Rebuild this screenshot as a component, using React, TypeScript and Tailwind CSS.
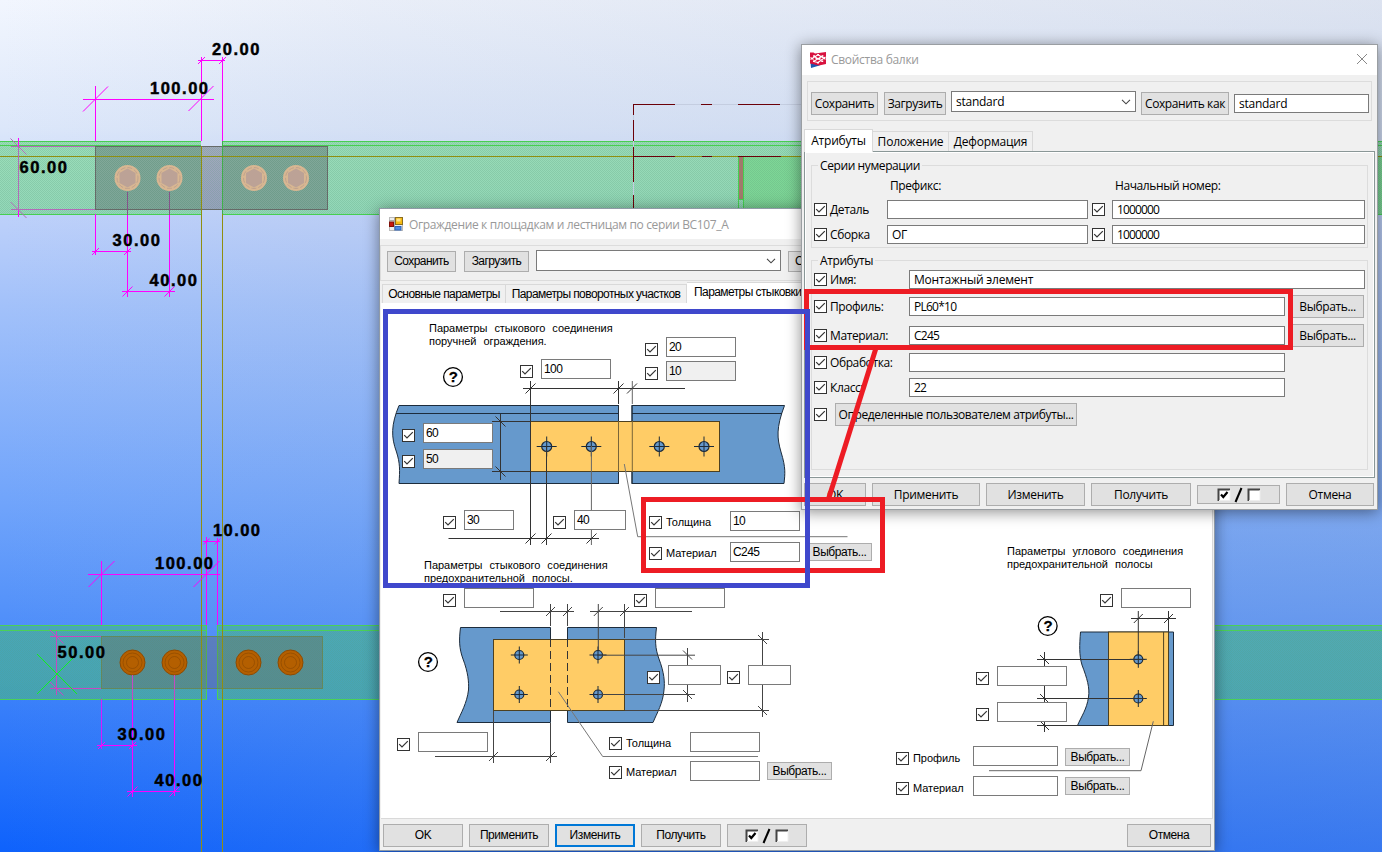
import React from "react";

/* ---------- shared controls ---------- */

const SEGOE = "font-['Open_Sans','Noto_Sans',sans-serif]";
const SANS = "font-['Liberation_Sans',Arial,sans-serif]";

function Check({ className = "" }: { className?: string }) {
  return (
    <span className={`block size-[13px] shrink-0 border border-[#333] bg-white ${className}`}>
      <svg viewBox="0 0 11 11" className="block size-[11px]" fill="none" stroke="#333" strokeWidth="1.2">
        <path d="M1.2 5.2 L4 8 L9.8 2.2" />
      </svg>
    </span>
  );
}

function Field({ className = "", children }: { className?: string; children?: React.ReactNode }) {
  return (
    <div className={`flex shrink-0 items-center overflow-hidden whitespace-nowrap border border-[#7a7a7a] ${className}`}>
      {children}
    </div>
  );
}

function Btn({ className = "", children }: { className?: string; children?: React.ReactNode }) {
  return (
    <button
      className={`flex shrink-0 items-center justify-center whitespace-nowrap bg-[#e1e1e1] ${className}`}
    >
      {children}
    </button>
  );
}

function Chevron() {
  return (
    <svg viewBox="0 0 10 6" className="h-[6px] w-[10px]" fill="none" stroke="#444" strokeWidth="1.1">
      <path d="M1 0.8 L5 4.8 L9 0.8" />
    </svg>
  );
}

function ToggleGlyph() {
  return (
    <svg viewBox="0 0 44 16" className="h-4 w-11" fill="none">
      <rect x="1" y="2" width="12" height="12" fill="#fff" />
      <path d="M1.5 14 V2.5 H13" stroke="#444" strokeWidth="2" />
      <path d="M13 3 V13.5 H2" stroke="#eee" />
      <path d="M4 7.5 L6.3 10 L10.5 5" stroke="#000" strokeWidth="2.2" />
      <path d="M18.5 15 L24.5 1" stroke="#000" strokeWidth="2" />
      <rect x="31" y="2" width="12" height="12" fill="#fff" />
      <path d="M31.5 14 V2.5 H43" stroke="#444" strokeWidth="2" />
      <path d="M43 3 V13.5 H32" stroke="#eee" />
    </svg>
  );
}

/* ---------- model view behind the dialogs ---------- */

const DIM = "#ff00ff";
const DIM_DULL = "#b06cb8";

function DimText({ x, y, w, children }: { x: number; y: number; w: number; children: string }) {
  return (
    <text
      x={x}
      y={y}
      textLength={w}
      fontSize="16.5"
      fontWeight="700"
      fill="#000"
      stroke="#000"
      strokeWidth="0.45"
      fontFamily="Liberation Sans, Arial, sans-serif"
    >
      {children}
    </text>
  );
}

function slash(x: number, y: number, r: number) {
  return `M${x - r} ${y + r} L${x + r} ${y - r}`;
}

function backslash(x: number, y: number, r: number) {
  return `M${x - r} ${y - r} L${x + r} ${y + r}`;
}

function Scene() {
  return (
    <svg viewBox="0 0 1382 852" className="absolute inset-0 h-[852px] w-[1382px]" fill="none">
      <defs>
        <pattern id="dots" width="2" height="2" patternUnits="userSpaceOnUse">
          <rect width="1" height="1" fill="#5a9a7a" fillOpacity="0.25" />
          <rect x="1" y="1" width="1" height="1" fill="#5a9a7a" fillOpacity="0.25" />
        </pattern>
      </defs>

      {/* upper rail */}
      <rect x="0" y="141" width="201" height="73" fill="#7cdc98" fillOpacity="0.66" />
      <rect x="222" y="141" width="1160" height="73" fill="#7cdc98" fillOpacity="0.66" />
      <rect x="743" y="157" width="639" height="57" fill="#6ed680" fillOpacity="0.6" />
      <rect x="0" y="141" width="201" height="73" fill="url(#dots)" />
      <rect x="222" y="141" width="1160" height="73" fill="url(#dots)" />
      <path d="M0 141.5 H201 M0 145.5 H201 M0 214.5 H201 M222 141.5 H1382 M222 145.5 H1382 M222 214.5 H1382" stroke="#46cf50" />
      <rect x="95.5" y="146.5" width="232" height="63" fill="#62606e" fillOpacity="0.42" stroke="#666a68" />
      <rect x="96" y="147" width="231" height="62" fill="url(#dots)" />
      <path d="M222.5 141 V214" stroke="#3fb04a" />
      <path d="M201.5 146 V852 M222.5 214 V852 M0 156.5 H1382" stroke="#8f8f10" />
      {[127.5, 169.5, 254, 296].map((x) => (
        <g key={x}>
          <circle cx={x} cy="178" r="13" fill="#d8b792" />
          <circle cx={x} cy="178" r="10.5" stroke="#c0a28e" strokeDasharray="5 2" />
          <path
            d={`M${x} 168.5 L${x + 8} 173 V183 L${x} 187.5 L${x - 8} 183 V173 Z`}
            fill="#bca296"
          />
        </g>
      ))}
      <rect x="738" y="157" width="5" height="42" fill="#a07a6c" />
      <path d="M738.5 157 V208 M743.5 157 V208 M738 199.5 H744" stroke="#46cf50" />
      <path d="M633.5 104.5 H802 M633.5 104 V208" stroke="#c4cde0" />
      <path
        d="M633 104.5 H675 M701 104.5 H712 M738 104.5 H780 M633.5 104 V115 M633.5 120 V141 M633.5 147 V182 M633.5 195 V208 M633 156.5 H675 M702 156.5 H712 M738 156.5 H781"
        stroke="#6b0008"
      />

      {/* upper dimensions */}
      <g stroke={DIM}>
        <path d="M198 60.5 H225 M201.5 57 V141 M222.5 57 V141 M83 99.5 H214 M95.5 86 V141" />
        <path d={slash(201.5, 60.5, 3.5)} />
        <path d={slash(222.5, 60.5, 3.5)} />
        <path d={slash(95.5, 99, 12.5)} />
        <path d={slash(201, 98.5, 12.5)} />
        <path d="M92 251.5 H131 M95.5 214 V255 M127.5 215 V297 M169.5 215 V297 M122 291.5 H175 M18.5 138 V146 M18.5 210 V217" />
        <path d={slash(95.5, 251.5, 3.5)} />
        <path d={slash(127.5, 251.5, 3.5)} />
        <path d={slash(127.5, 291.5, 5)} />
        <path d={slash(169.5, 291.5, 5)} />
      </g>
      <g stroke={DIM_DULL}>
        <path d="M18.5 146 V210 M11 146.5 H95 M11 209.5 H95" />
        <path d="M127.5 192 V215 M169.5 192 V215" stroke="#85538a" />
        <path d={backslash(18.5, 146.5, 8)} />
        <path d={backslash(18.5, 210, 8)} />
      </g>

      {/* lower rail */}
      <rect x="0" y="625" width="207" height="74" fill="#46b496" fillOpacity="0.66" />
      <rect x="217" y="625" width="1165" height="74" fill="#46b496" fillOpacity="0.66" />
      <rect x="0" y="630" width="207" height="69" fill="url(#dots)" />
      <rect x="217" y="630" width="1165" height="69" fill="url(#dots)" />
      <path d="M0 625.5 H206.5 V699.5 H0 M0 630.5 H206 M1382 625.5 H217.5 V699.5 H1382 M217 630.5 H1382" stroke="#4bd058" />
      <rect x="101.5" y="636.5" width="221" height="52" fill="#706250" fillOpacity="0.34" stroke="#64885c" />
      <path d="M201.5 625 V852 M222.5 625 V852" stroke="#8f8f10" />
      {[132.5, 174.5, 248.5, 290.5].map((x) => (
        <g key={x} stroke="#8f4a00">
          <circle cx={x} cy="662.5" r="12.5" fill="#b45f00" />
          <circle cx={x} cy="662.5" r="9.5" strokeOpacity="0.7" />
          <circle cx={x} cy="662.5" r="6" strokeOpacity="0.7" />
        </g>
      ))}

      {/* lower dimensions */}
      <g stroke={DIM}>
        <path d="M203 541.5 H220 M206.5 537 V625 M217.5 538 V625 M88 574.5 H220 M101.5 561 V625" />
        <path d={slash(206.5, 541.5, 3)} />
        <path d={slash(217.5, 541.5, 3)} />
        <path d={slash(101.5, 574, 13)} />
        <path d={slash(206.5, 574, 13)} />
        <path d="M101.5 699 V749" strokeOpacity="0.8" />
        <path d="M97 745.5 H137 M132.5 699 V797 M174.5 699 V796 M127 791.5 H180" />
        <path d={slash(101.5, 745.5, 3.5)} />
        <path d={slash(132.5, 745.5, 3.5)} />
        <path d={slash(132.5, 791.5, 5)} />
        <path d={slash(174.5, 791.5, 5)} />
      </g>
      <g stroke="#c748c0">
        <path d="M56.5 631 V695 M50 636.5 H101 M50 688.5 H101 M132.5 675 V699 M174.5 675 V699" />
        <path d={backslash(56.5, 636.5, 7)} />
        <path d={backslash(56.5, 688.5, 7)} />
      </g>
      <path d="M37 694 L77 654 M37 654 L77 694" stroke="#10f020" />

      <DimText x={212} y={55} w={47.5}>20.00</DimText>
      <DimText x={150} y={94} w={58}>100.00</DimText>
      <DimText x={19.5} y={173} w={47.5}>60.00</DimText>
      <DimText x={112.5} y={246} w={47.5}>30.00</DimText>
      <DimText x={149.5} y={286} w={47.5}>40.00</DimText>
      <DimText x={213} y={536} w={47}>10.00</DimText>
      <DimText x={155} y={569} w={58}>100.00</DimText>
      <DimText x={57.5} y={658} w={47.5}>50.00</DimText>
      <DimText x={117.5} y={740} w={47.5}>30.00</DimText>
      <DimText x={154.5} y={786} w={47.5}>40.00</DimText>
    </svg>
  );
}

/* ---------- railing component dialog ---------- */

function Hole({ x, y, r = 5, c = 10 }: { x: number; y: number; r?: number; c?: number }) {
  return (
    <g stroke="#1c2a38">
      <circle cx={x} cy={y} r={r} fill="#6699cc" strokeWidth="1.2" />
      <path d={`M${x - c} ${y} H${x + c} M${x} ${y - c} V${y + c}`} strokeWidth="1" />
    </g>
  );
}

function Help({ x, y }: { x: number; y: number }) {
  return (
    <g>
      <circle cx={x} cy={y} r="9.4" fill="#fff" stroke="#000" strokeWidth="1.3" />
      <text x={x} y={y + 5.2} textAnchor="middle" fontSize="15" fontWeight="700" fill="#000" stroke="#000" strokeWidth="0.3" fontFamily="Liberation Sans, Arial, sans-serif">
        ?
      </text>
    </g>
  );
}

function Diagrams() {
  return (
    <svg viewBox="381 303 832 516" className="absolute inset-0 h-[516px] w-[832px]" fill="none" strokeWidth="1">
      {/* handrail splice */}
      <g fill="#6699cc" stroke="#1d2c3c">
        <path d="M399 405.5 C391 425 391 437 396.5 452 C400 463 400 470 399 483.5 H618.5 V405.5 Z" />
        <path d="M632 405.5 H784.5 C776 428 777 438 781 452 C786 468 785 474 784 483.5 H632 Z" />
      </g>
      <path d="M396 413.5 H618 M632 413.5 H782" stroke="#1d2c3c" />
      <path d="M618.5 405 V484 M632 405 V484" stroke="#1d2c3c" />
      <rect x="530.5" y="421.5" width="189" height="50" fill="#ffcc66" stroke="#4d4020" />
      <path d="M618.5 421 V472 M632.3 421 V472" stroke="#7a6538" />
      <Hole x={546.7} y={446.5} />
      <Hole x={591.3} y={446.5} />
      <Hole x={659.3} y={446.5} />
      <Hole x={704} y={446.5} />
      <g stroke="#333">
        <path d="M523 388.5 H685 M530.5 381 V545 M618.5 381 V404 M546.5 446 V545 M448.5 538.5 H599" />
        <path d="M591.4 446 V545 M632.3 381 V404" stroke="#666" />
        <path d="M500.5 414 V480 M492 421.5 H531 M492 471.5 H531" />
        <path d={slash(530.5, 388.5, 5)} />
        <path d={slash(618.5, 388.5, 5)} />
        <path d={slash(632, 388.5, 5)} />
        <path d={slash(530.5, 538.5, 5)} />
        <path d={slash(546.5, 538.5, 5)} />
        <path d={slash(591.5, 538.5, 5)} />
        <path d={backslash(500.5, 421.5, 5)} />
        <path d={backslash(500.5, 471.5, 5)} />
      </g>
      <path d="M624.3 464 L637.7 536.7 H847.5" stroke="#777" />

      {/* toe-board splice */}
      <g fill="#6699cc" stroke="#1d2c3c">
        <path d="M460.5 627.5 C459 640 459 648 463 659 C468 672 469 682 468.5 690 C467 703 461 713 457 722.5 H550.5 V627.5 Z" />
        <path d="M567.5 627.5 H656.5 C655 640 655 648 659 659 C664 672 665 682 664 690 C663 703 657 713 653 722.5 H567.5 Z" />
      </g>
      <rect x="493.5" y="639.5" width="131" height="71" fill="#ffcc66" stroke="#4d4020" />
      <path d="M550.5 639 V711 M567.5 639 V711" stroke="#333" strokeDasharray="8 4" />
      <Hole x={519.3} y={655} r={4.5} c={8.5} />
      <Hole x={519.3} y={694.5} r={4.5} c={8.5} />
      <Hole x={598} y={655} r={4.5} c={8.5} />
      <Hole x={598} y={694.5} r={4.5} c={8.5} />
      <g stroke="#444">
        <path d="M500 611.5 H574 M590 611.5 H692 M550.5 604 V626 M567.5 604 V626 M598.3 604 V650 M624.5 604 V638" />
        <path d="M598 655.2 H695 M598 694.5 H695 M687.5 648 V702 M625 639.5 H769 M625 710.5 H769 M762.5 632 V717" />
        <path d="M435 756.5 H557 M493.5 711 V763 M550.5 723 V763" />
        <path d={slash(550.5, 611.5, 4.5)} />
        <path d={slash(567.5, 611.5, 4.5)} />
        <path d={slash(598.3, 611.5, 4.5)} />
        <path d={slash(624.5, 611.5, 4.5)} />
        <path d={backslash(687.5, 655, 4.5)} />
        <path d={backslash(687.5, 694.5, 4.5)} />
        <path d={backslash(762.5, 639.5, 4.5)} />
        <path d={backslash(762.5, 710.5, 4.5)} />
        <path d={slash(493.5, 756.5, 4.5)} />
        <path d={slash(550.5, 756.5, 4.5)} />
      </g>
      <path d="M558.3 691.7 L602.7 756.5 H758" stroke="#777" />

      {/* toe-board corner joint */}
      <path
        d="M1080.5 632 C1079.5 645 1079 655 1082 665 C1087 678 1090 688 1088.5 697 C1087 709 1081 717 1077.5 725.5 H1173.5 V632 Z"
        fill="#6699cc"
        stroke="#1d2c3c"
      />
      <rect x="1108.5" y="632" width="60" height="93.5" fill="#ffcc66" stroke="#4d4020" />
      <path d="M1163.6 632 V725.5" stroke="#4d4020" />
      <Hole x={1138.3} y={659.3} r={4.5} c={8.5} />
      <Hole x={1138.3} y={698.5} r={4.5} c={8.5} />
      <g stroke="#333">
        <path d="M1131 618.5 H1176 M1138.3 611 V655 M1168.5 611 V632 M1044.5 652 V732 M1037 659.5 H1145 M1037 698.5 H1145 M1037 725.5 H1078" />
        <path d={slash(1138.3, 618.5, 4.5)} />
        <path d={slash(1168.5, 618.5, 4.5)} />
        <path d={backslash(1044.5, 659.5, 4.5)} />
        <path d={backslash(1044.5, 698.5, 4.5)} />
        <path d={backslash(1044.5, 725.5, 4.5)} />
      </g>
      <path d="M1153.3 721.3 L1141 770.7 H989" stroke="#666" />

      <Help x={453} y={377} />
      <Help x={428} y={662} />
      <Help x={1047.7} y={626} />
    </svg>
  );
}

/* Controls pinned on the drawing. */
const checks = [
  "left-[139px] top-[62px]", "left-[264px] top-[40px]", "left-[264px] top-[64px]",
  "left-[21px] top-[126px]", "left-[21px] top-[152px]", "left-[62px] top-[213px]",
  "left-[172px] top-[213px]", "left-[62px] top-[291px]", "left-[253px] top-[291px]",
  "left-[266px] top-[368px]", "left-[346px] top-[368px]", "left-[16px] top-[435px]",
  "left-[719px] top-[291px]", "left-[595px] top-[369px]", "left-[595px] top-[405px]",
];

const labelled = [
  { pos: "left-[268px] top-[213px]", text: "Толщина" },
  { pos: "left-[268px] top-[244px]", text: "Материал" },
  { pos: "left-[228px] top-[434px]", text: "Толщина" },
  { pos: "left-[228px] top-[463px]", text: "Материал" },
  { pos: "left-[515px] top-[449px]", text: "Профиль" },
  { pos: "left-[515px] top-[479px]", text: "Материал" },
];

const fields = [
  { pos: "left-[160px] top-[56px] w-[70px] bg-white", v: "100" },
  { pos: "left-[285px] top-[34px] w-[70px] bg-white", v: "20" },
  { pos: "left-[285px] top-[58px] w-[70px] bg-[#f0f0f0]", v: "10" },
  { pos: "left-[42px] top-[120px] w-[70px] bg-white", v: "60" },
  { pos: "left-[42px] top-[146px] w-[70px] bg-[#f0f0f0]", v: "50" },
  { pos: "left-[83px] top-[207px] w-[50px] bg-white", v: "30" },
  { pos: "left-[193px] top-[207px] w-[52px] bg-white", v: "40" },
  { pos: "left-[349px] top-[208px] w-[70px] bg-white", v: "10" },
  { pos: "left-[349px] top-[239px] w-[70px] bg-white", v: "C245" },
  { pos: "left-[83px] top-[285px] w-[70px] bg-white", v: "" },
  { pos: "left-[274px] top-[285px] w-[70px] bg-white", v: "" },
  { pos: "left-[287px] top-[362px] w-[53px] bg-white", v: "" },
  { pos: "left-[367px] top-[362px] w-[43px] bg-white", v: "" },
  { pos: "left-[37px] top-[429px] w-[70px] bg-white", v: "" },
  { pos: "left-[309px] top-[429px] w-[70px] bg-white", v: "" },
  { pos: "left-[309px] top-[458px] w-[70px] bg-white", v: "" },
  { pos: "left-[740px] top-[285px] w-[70px] bg-white", v: "" },
  { pos: "left-[616px] top-[363px] w-[70px] bg-white", v: "" },
  { pos: "left-[616px] top-[399px] w-[70px] bg-white", v: "" },
  { pos: "left-[592px] top-[443px] w-[85px] bg-white", v: "" },
  { pos: "left-[592px] top-[473px] w-[85px] bg-white", v: "" },
];

const pickers = [
  "left-[426px] top-[240px]", "left-[386px] top-[459px]",
  "left-[684px] top-[445px]", "left-[684px] top-[474px]",
];

const captions = [
  { pos: "left-[48px] top-[19px]", a: "Параметры стыкового соединения", b: "поручней ограждения." },
  { pos: "left-[43px] top-[256px]", a: "Параметры стыкового соединения", b: "предохранительной полосы." },
  { pos: "left-[626px] top-[242px]", a: "Параметры углового соединения", b: "предохранительной полосы" },
];

function FormsIcon() {
  return (
    <svg viewBox="0 0 14 14" className="size-[14px]">
      <rect x="0.5" y="0.5" width="13" height="13" fill="#eee" stroke="#bbb" />
      <path d="M0 3.5 H6 M6 7.5 H14 M5.5 0 V14" stroke="#aaa" />
      <rect x="6.5" y="0.5" width="7" height="7" fill="#f5b90f" stroke="#8a6d20" />
      <rect x="7.5" y="1.5" width="4" height="3" fill="#ffe28a" />
      <rect x="0.5" y="5" width="4" height="4.5" fill="#c8170f" stroke="#801008" />
      <rect x="6" y="9.5" width="6" height="3.5" fill="#4f8be6" stroke="#2e64ba" />
    </svg>
  );
}

function RailingDialog() {
  return (
    <section
      className={`absolute left-[379px] top-[208px] flex h-[643px] w-[836px] flex-col border border-[#8f9aa6] bg-[#f0f0f0] text-[12px] leading-[13px] tracking-[-0.58px] text-black shadow-[0_2px_14px_rgba(0,0,0,0.45)] ${SANS}`}
    >
      <header className="flex h-[30px] shrink-0 items-center gap-[6px] bg-white pl-[9px]">
        <FormsIcon />
        <span className={`text-[12px] tracking-[-0.36px] text-[#999] ${SEGOE}`}>
          Ограждение к площадкам и лестницам по серии BC107_A
        </span>
      </header>

      <div className="mt-[6px] flex h-[36px] shrink-0 items-start border border-[#dcdcdc] pl-[6px] pt-[4px]">
        <Btn className="mt-px h-[21px] w-[69px] border border-[#adadad]">Сохранить</Btn>
        <Btn className="ml-2 mt-px h-[21px] w-[65px] border border-[#adadad]">Загрузить</Btn>
        <Field className="ml-[7px] h-[21px] w-[245px] justify-end bg-white pr-1">
          <Chevron />
        </Field>
        <div className="ml-[7px] mt-px flex h-[21px] w-[20px] items-center border border-[#adadad] bg-[#e1e1e1] pl-[6px]">
          С
        </div>
      </div>

      <nav className="mt-px flex h-[21px] shrink-0 items-end pl-[2px]">
        <span className="flex h-[19px] w-[124px] items-center justify-center border border-b-0 border-[#d9d9d9] pt-px">
          Основные параметры
        </span>
        <span className="flex h-[19px] w-[181px] items-center justify-center border border-b-0 border-l-0 border-[#d9d9d9] pt-px">
          Параметры поворотных участков
        </span>
        <span className="flex h-[21px] w-[130px] items-center whitespace-nowrap border border-b-0 border-l-0 border-[#d9d9d9] bg-white pb-[2px] pl-[7px]">
          Параметры стыковки
        </span>
      </nav>

      <div className="relative ml-px h-[516px] w-[832px] shrink-0 border-b border-r border-[#d9d9d9] bg-white">
        <Diagrams />
        {captions.map((c) => (
          <p key={c.pos} className={`absolute whitespace-nowrap text-[11px] tracking-[-0.03px] [word-spacing:4px] ${c.pos}`}>
            {c.a}
            <br />
            {c.b}
          </p>
        ))}
        {checks.map((pos) => (
          <Check key={pos} className={`absolute ${pos}`} />
        ))}
        {labelled.map((l) => (
          <label key={l.pos} className={`absolute flex items-center gap-[4px] text-[11px] tracking-[-0.05px] ${l.pos}`}>
            <Check />
            {l.text}
          </label>
        ))}
        {fields.map((f) => (
          <Field key={f.pos} className={`absolute h-[20px] pl-[2px] ${f.pos}`}>
            {f.v}
          </Field>
        ))}
        {pickers.map((pos) => (
          <Btn key={pos} className={`absolute h-[18px] w-[65px] border border-[#adadad] tracking-[-0.45px] ${pos}`}>
            Выбрать...
          </Btn>
        ))}
      </div>

      <footer className="flex gap-[6px] pl-[3px] pt-[5px] tracking-[-0.42px]">
        <Btn className="h-[23px] w-[80px] border border-[#adadad]">OK</Btn>
        <Btn className="h-[23px] w-[80px] border border-[#adadad]">Применить</Btn>
        <Btn className="h-[23px] w-[80px] border-2 border-[#0078d7]">Изменить</Btn>
        <Btn className="h-[23px] w-[80px] border border-[#adadad]">Получить</Btn>
        <Btn className="h-[23px] w-[80px] border border-[#adadad]"><ToggleGlyph /></Btn>
        <Btn className="ml-auto mr-[3px] h-[23px] w-[84px] border border-[#adadad]">Отмена</Btn>
      </footer>
    </section>
  );
}

/* ---------- beam properties dialog ---------- */

function TeklaIcon() {
  return (
    <svg viewBox="0 0 16 16" className="size-4" fill="none">
      <path d="M0.5 10 H9.5 V13.5 L1 16 Z" fill="#1c57b0" />
      <path d="M0 0.5 H3.5 L5 1.5 L16 0 V12 L9 13.5 L0 11.5 Z" fill="#d8123f" />
      <path
        d="M0.5 5.5 L3.5 7.5 M3.5 4 L12.5 9.5 M8 2.8 L15.5 7.2 M8 2.8 L0.5 7.5 M12.5 4 L3.5 9.5 M15.5 5 L8 10.5 M3.5 9.5 L8 10.5 M5.5 6.5 H10.5"
        stroke="#fff"
        strokeWidth="1.1"
      />
      <path d="M3.2 4 H5 M7.2 2.8 H9 M11.6 4 H13.4 M3 9.3 H4.5 M7 10.8 H9 M11.5 9.3 H13.2" stroke="#fff" strokeWidth="1.4" />
    </svg>
  );
}

function Group({ title, className, children }: { title: string; className: string; children: React.ReactNode }) {
  return (
    <div className={`relative flex flex-col border border-[#dcdcdc] ${className}`}>
      <span className="absolute -top-[8px] left-[6px] bg-[#f0f0f0] px-[2px] leading-4">{title}</span>
      {children}
    </div>
  );
}

function AttrRow({ label, value, wide, pick, className }: { label: string; value: string; wide?: boolean; pick?: boolean; className: string }) {
  return (
    <div className={`flex h-[19px] shrink-0 items-center pl-[2px] ${className}`}>
      <Check />
      <span className="ml-[3px] w-[79px] whitespace-nowrap">{label}</span>
      <Field
        className={
          wide
            ? "h-[19px] w-[456px] bg-white pl-1 tracking-[-0.2px]"
            : "h-[19px] w-[376px] bg-white pl-1 tracking-[-0.75px]"
        }
      >
        {value}
      </Field>
      {pick && <Btn className="ml-[5px] h-[23px] w-[74px] border border-[#adadad] pl-px">Выбрать...</Btn>}
    </div>
  );
}

function BeamDialog() {
  return (
    <section
      className={`absolute left-[801px] top-[44px] flex h-[466px] w-[577px] flex-col border border-[#9a9ea2] bg-[#f0f0f0] text-[12px] leading-4 tracking-[-0.4px] text-black shadow-[0_2px_14px_rgba(0,0,0,0.45)] ${SEGOE}`}
    >
      <header className="flex h-[30px] shrink-0 items-center bg-white pl-[8px] pr-[10px] tracking-[-0.3px] text-[#999]">
        <TeklaIcon />
        <span className="ml-[5px]">Свойства балки</span>
        <svg viewBox="0 0 10 10" className="ml-auto size-[10px] -translate-y-px" stroke="#888" strokeWidth="1">
          <path d="M0 0 L10 10 M10 0 L0 10" />
        </svg>
      </header>

      <div className="ml-[5px] mt-[6px] flex h-[40px] w-[565px] shrink-0 items-start border border-[#dcdcdc] pl-[3px] pt-[9px]">
        <Btn className="mt-px h-[23px] w-[67px] border border-[#adadad]">Сохранить</Btn>
        <Btn className="ml-[6px] mt-px h-[23px] w-[62px] border border-[#adadad]">Загрузить</Btn>
        <Field className="ml-[5px] h-[21px] w-[185px] justify-between bg-white pl-1 pr-1 tracking-[-0.25px]">
          <span>standard</span>
          <Chevron />
        </Field>
        <Btn className="ml-[5px] mt-px h-[23px] w-[88px] border border-[#adadad]">Сохранить как</Btn>
        <Field className="ml-[5px] mt-[3px] h-[19px] w-[135px] bg-white pl-1 tracking-[-0.25px]">standard</Field>
      </div>

      <nav className="mt-[8px] flex h-[22px] shrink-0 items-end pl-[2px] tracking-[-0.2px]">
        <span className="relative -mb-px flex h-[23px] w-[69px] items-center justify-center border border-b-0 border-[#d9d9d9] bg-white">
          Атрибуты
        </span>
        <span className="flex h-[20px] w-[76px] items-center justify-center border border-b-0 border-l-0 border-[#d9d9d9] pt-px">
          Положение
        </span>
        <span className="flex h-[20px] w-[84px] items-center justify-center border border-b-0 border-l-0 border-[#d9d9d9] pt-px">
          Деформация
        </span>
      </nav>

      <div className="ml-[2px] flex h-[327px] w-[571px] shrink-0 flex-col border border-[#8a9797] pl-[6px] pt-[13px] shadow-[inset_0_0_0_1px_#fff]">
        <Group title="Серии нумерации" className="h-[83px] w-[557px]">
          <div className="flex h-[34px] shrink-0 items-center pl-[78px] pt-[5px]">
            <span className="w-[225px]">Префикс:</span>
            <span>Начальный номер:</span>
          </div>
          {[
            { l: "Деталь", v: "" },
            { l: "Сборка", v: "ОГ" },
          ].map((r) => (
            <div key={r.l} className="mb-[6px] flex h-[19px] shrink-0 items-center pl-[2px]">
              <Check />
              <span className="ml-[3px] w-[57px]">{r.l}</span>
              <Field className="h-[19px] w-[201px] bg-white pl-1">{r.v}</Field>
              <Check className="ml-1" />
              <Field className="ml-[7px] h-[19px] w-[253px] bg-white pl-1 tracking-[-0.85px]">1000000</Field>
            </div>
          ))}
        </Group>

        <Group title="Атрибуты" className="mt-[12px] h-[210px] w-[557px]">
          <AttrRow label="Имя:" value="Монтажный элемент" wide className="mt-[9px]" />
          <AttrRow label="Профиль:" value="PL60*10" pick className="mt-[8px]" />
          <AttrRow label="Материал:" value="C245" pick className="mt-[10px]" />
          <AttrRow label="Обработка:" value="" className="mt-[8px]" />
          <AttrRow label="Класс:" value="22" className="mt-[6px]" />
          <div className="mt-[6px] flex items-center pl-[2px]">
            <Check />
            <Btn className="ml-[8px] h-[23px] w-[242px] border border-[#adadad]">
              Определенные пользователем атрибуты...
            </Btn>
          </div>
        </Group>
      </div>

      <footer className="flex items-center gap-[6px] pl-[2px] pt-[5px] tracking-[-0.3px]">
        <Btn className="h-[23px] w-[62px] border border-[#adadad]">OK</Btn>
        <Btn className="h-[23px] w-[108px] border border-[#adadad]">Применить</Btn>
        <Btn className="h-[23px] w-[99px] border border-[#adadad]">Изменить</Btn>
        <Btn className="h-[23px] w-[100px] border border-[#adadad]">Получить</Btn>
        <Btn className="h-[19px] w-[83px] border border-[#adadad]"><ToggleGlyph /></Btn>
        <Btn className="h-[23px] w-[88px] border border-[#adadad]">Отмена</Btn>
      </footer>
    </section>
  );
}

/* ---------- highlight frames over both dialogs ---------- */

function Highlights() {
  return (
    <div className="pointer-events-none absolute inset-0">
      <div className="absolute left-[804px] top-[289px] h-[61px] w-[489px] border-[5px] border-[#ed1c24]" />
      <div className="absolute left-[641px] top-[497px] h-[76px] w-[244px] border-[5px] border-[#ed1c24]" />
      <svg viewBox="0 0 1382 852" className="absolute inset-0 h-[852px] w-[1382px]">
        <path d="M876 348 L828.5 499" stroke="#ed1c24" strokeWidth="5" />
      </svg>
      <div className="absolute left-[383px] top-[309px] h-[279px] w-[427px] border-[5px] border-[#3f48cc]" />
    </div>
  );
}

export default function App() {
  return (
    <main className="relative h-[852px] w-[1382px] overflow-hidden bg-[linear-gradient(to_right,rgba(165,178,205,0)_0%,rgba(165,178,205,0.12)_27%,rgba(165,178,205,0.28)_100%),linear-gradient(to_bottom,#f2f6fe_0%,#dce7fa_15%,#bed1fa_25%,#a2c1fa_36%,#70a4fb_59%,#5794fa_70%,#3a80fa_82%,#0e62fc_100%)]">
      <Scene />
      <RailingDialog />
      <BeamDialog />
      <Highlights />
    </main>
  );
}
